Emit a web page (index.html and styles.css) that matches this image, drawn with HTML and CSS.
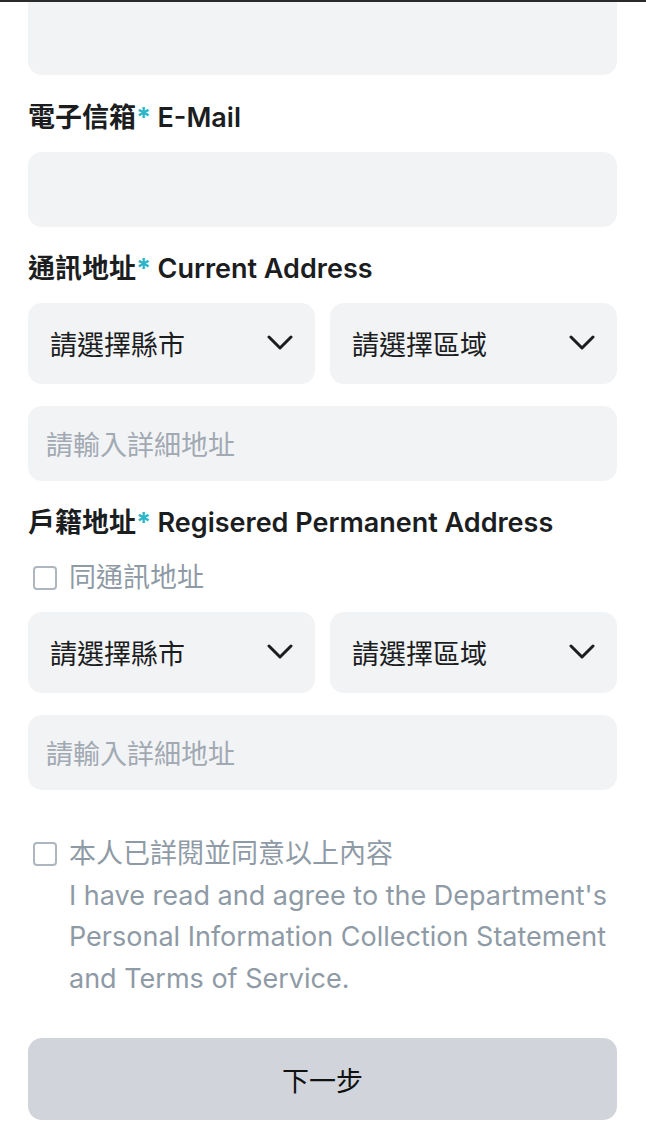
FILE: index.html
```html
<!DOCTYPE html>
<html lang="zh-Hant">
<head>
<meta charset="utf-8">
<title>表單</title>
<link rel="stylesheet" href="styles.css">
</head>
<body>
<div class="topbar"></div>
<main class="form">
  <div class="field field-cut"></div>

  <div class="label first">電子信箱<span class="req">*</span> <span class="en">E-Mail</span></div>
  <div class="field"></div>

  <div class="label">通訊地址<span class="req">*</span> <span class="en">Current Address</span></div>
  <div class="select-row">
    <div class="select"><span>請選擇縣市</span><svg class="chev" viewBox="0 0 26 15"><path d="M2 2 L13 13 L24 2" /></svg></div>
    <div class="select"><span>請選擇區域</span><svg class="chev" viewBox="0 0 26 15"><path d="M2 2 L13 13 L24 2" /></svg></div>
  </div>
  <div class="field field-text placeholder">請輸入詳細地址</div>

  <div class="label">戶籍地址<span class="req">*</span> <span class="en">Regisered Permanent Address</span></div>
  <label class="check-row same">
    <span class="box"></span><span>同通訊地址</span>
  </label>
  <div class="select-row">
    <div class="select"><span>請選擇縣市</span><svg class="chev" viewBox="0 0 26 15"><path d="M2 2 L13 13 L24 2" /></svg></div>
    <div class="select"><span>請選擇區域</span><svg class="chev" viewBox="0 0 26 15"><path d="M2 2 L13 13 L24 2" /></svg></div>
  </div>
  <div class="field field-text placeholder">請輸入詳細地址</div>

  <label class="check-row agree">
    <span class="box"></span>
    <span class="agree-text">本人已詳閱並同意以上內容<br>I have read and agree to the Department's Personal Information Collection Statement and Terms of Service.</span>
  </label>

  <button class="next" type="button">下一步</button>
</main>
</body>
</html>
```
FILE: styles.css
```css
html, body {
  margin: 0;
  padding: 0;
  background: #ffffff;
}
body {
  font-family: "Inter", "Noto Sans CJK TC", sans-serif;
  color: #1b1d1f;
  font-size: 27px;
}
.topbar {
  height: 2px;
  background: #2b2b2b;
}
.form {
  padding: 0 29px 0 28px;
  display: flex;
  flex-direction: column;
}
.field {
  height: 75px;
  background: #f2f3f5;
  border-radius: 14px;
  box-sizing: border-box;
}
.field-cut {
  height: 73px;
  border-radius: 0 0 14px 14px;
}
.field-text {
  display: flex;
  align-items: center;
  padding-left: 18px;
}
.placeholder {
  color: #a1a9b2;
}
.label {
  margin: 24px 0 16px;
  line-height: 36px;
  font-weight: 700;
  color: #1b1d1f;
}
.label.first {
  margin-top: 25px;
}
.label .req {
  color: #2bb6c8;
}
.label .en {
  font-weight: 600;
}
.select-row {
  display: grid;
  grid-template-columns: 1fr 1fr;
  gap: 15px;
  margin-bottom: 22px;
}
.select {
  height: 81px;
  background: #f2f3f5;
  border-radius: 14px;
  display: flex;
  align-items: center;
  justify-content: space-between;
  padding: 0 22px 0 22px;
  color: #1b1d1f;
}
.chev {
  width: 26px;
  height: 15px;
  fill: none;
  stroke: #1b1d1f;
  stroke-width: 3;
  stroke-linecap: round;
  stroke-linejoin: round;
  margin-top: -2px;
}
.check-row {
  display: flex;
  align-items: flex-start;
  gap: 12px;
  color: #8e9aa5;
  padding-left: 5px;
}
.check-row.same {
  line-height: 36px;
  margin: 3px 0 16px;
}
.box {
  flex: none;
  width: 24px;
  height: 24px;
  box-sizing: border-box;
  border: 2px solid #aeb7bf;
  border-radius: 4px;
  background: #ffffff;
  margin-top: 6px;
}
.check-row.agree {
  margin-top: 43px;
  line-height: 41.5px;
}
.check-row.agree .box {
  margin-top: 9px;
}
.agree-text {
  flex: 1;
}
.next {
  margin: 39px 0 0;
  height: 82px;
  border: none;
  border-radius: 14px;
  background: #d1d5db;
  font-family: "Inter", "Noto Sans CJK TC", sans-serif;
  font-size: 27px;
  color: #111111;
}
```
